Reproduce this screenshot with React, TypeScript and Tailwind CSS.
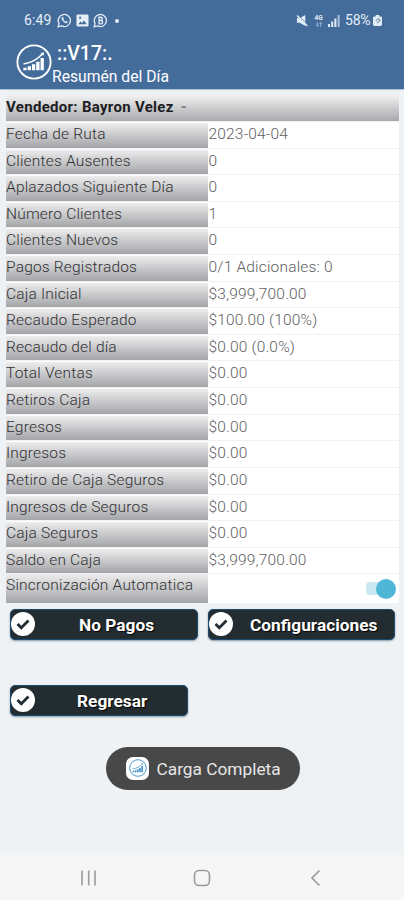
import React from 'react';

interface Row {
  label: string;
  value: string;
}

const ROWS: Row[] = [
  { label: 'Fecha de Ruta', value: '2023-04-04' },
  { label: 'Clientes Ausentes', value: '0' },
  { label: 'Aplazados Siguiente Día', value: '0' },
  { label: 'Número Clientes', value: '1' },
  { label: 'Clientes Nuevos', value: '0' },
  { label: 'Pagos Registrados', value: '0/1 Adicionales: 0' },
  { label: 'Caja Inicial', value: '$3,999,700.00' },
  { label: 'Recaudo Esperado', value: '$100.00 (100%)' },
  { label: 'Recaudo del día', value: '$0.00 (0.0%)' },
  { label: 'Total Ventas', value: '$0.00' },
  { label: 'Retiros Caja', value: '$0.00' },
  { label: 'Egresos', value: '$0.00' },
  { label: 'Ingresos', value: '$0.00' },
  { label: 'Retiro de Caja Seguros', value: '$0.00' },
  { label: 'Ingresos de Seguros', value: '$0.00' },
  { label: 'Caja Seguros', value: '$0.00' },
  { label: 'Saldo en Caja', value: '$3,999,700.00' },
];

const Logo: React.FC<{ className?: string }> = ({ className }) => (
  <svg viewBox="0 0 36 36" className={className} fill="none" stroke="currentColor">
    <circle cx="18" cy="18" r="16.6" strokeWidth="1.9" />
    <path d="M9 26.300v-2.600M13.300 26.300v-4M17.600 26.300v-6M21.900 26.300v-8.500M26.200 26.300V14" strokeWidth="3.300" />
    <path d="M7.500 20C15 19 21.500 15.500 27.300 9" strokeWidth="1.5" />
    <path d="M24.800 9.800l2.700-1-.4 2.800" strokeWidth="1" />
  </svg>
);

const StatusBar = () => (
  <div className="flex h-10 items-center justify-between pt-[1px] pr-[22px] pl-[24px] text-[#e3edf7]">
    <div className="flex items-center">
      <span className="w-[33px] text-[14px] tracking-[0.1px]">6:49</span>
      <svg viewBox="0 0 16 16" className="size-[15px]" fill="none" stroke="currentColor" strokeWidth="1.4">
        <path d="M1.200 14.800l1-3.500A6.500 6.500 0 1 1 4.800 13.800z" />
        <path d="M5.400 4.600c-.8.8-.6 2.300.9 4s3.400 2.600 4.600 1.700l.3-1-1.700-.9-.8.7c-1-.4-1.600-1.100-2-2l.6-.8-.8-1.800z" fill="currentColor" strokeWidth=".3" />
      </svg>
      <svg viewBox="0 0 14 14" className="ml-[4px] size-[13px]">
        <path fillRule="evenodd" fill="currentColor" d="M2 .5h10a1.500 1.500 0 0 1 1.500 1.500v10a1.500 1.500 0 0 1-1.500 1.500H2A1.500 1.500 0 0 1 .5 12V2A1.500 1.500 0 0 1 2 .5zM2.500 11h9L8.600 7 6.500 9.600 5 8zM3.500 3v2h2V3z" />
      </svg>
      <svg viewBox="0 0 16 16" className="ml-[4px] size-[15px]" fill="none" stroke="currentColor" strokeWidth="1.4">
        <path d="M1.200 14.800l1-3.500A6.500 6.500 0 1 1 4.800 13.800z" />
        <path d="M6.500 4.500v7h2a1.700 1.700 0 0 0 0-3.500h-2 1.700a1.700 1.700 0 0 0 0-3.500z" />
      </svg>
      <span className="ml-[7px] size-[4px] rounded-full bg-[#e3edf7]" />
    </div>
    <div className="flex items-center">
      <svg viewBox="0 0 14 14" className="mr-[1px] size-[13px]">
        <path d="M1 4.500h3L10 1v12L4 9.500H1z" fill="currentColor" />
        <path d="M2.500 1l10 11.500" stroke="#436c9b" strokeWidth="1" fill="none" />
        <path d="M1.200 1.500l11 11.500" stroke="currentColor" strokeWidth="1.600" fill="none" />
      </svg>
      <span className="ml-[4px] flex w-[9px] flex-col items-center">
        <span className="text-[6.5px] leading-[7px] font-bold">4G</span>
        <svg viewBox="0 0 8 5" className="h-[5px] w-[8px] opacity-60" fill="none" stroke="currentColor" strokeWidth=".9">
          <path d="M2.300 0v4.300M.8 2.900l1.500 1.500 1.500-1.500M5.700 5V.7M4.200 2.100L5.700.6l1.500 1.500" />
        </svg>
      </span>
      <svg viewBox="0 0 12 12" className="ml-[5px] size-[12px]" fill="currentColor">
        <path d="M0 9h2v3H0zM3.200 6.500h2V12h-2zM6.400 3.500h2V12h-2z" />
        <path d="M9.600 0h2v12h-2z" opacity=".65" />
      </svg>
      <span className="ml-[5px] w-[28px] text-[14px] tracking-[-0.2px]">58%</span>
      <svg viewBox="0 0 10 12" className="h-[11px] w-[9px]">
        <path d="M3 0h4v1.500h1.500A1.500 1.500 0 0 1 10 3v7.500A1.500 1.500 0 0 1 8.500 12h-7A1.500 1.500 0 0 1 0 10.500V3a1.500 1.500 0 0 1 1.500-1.500H3z" fill="currentColor" />
        <path d="M3 6.500l3-2.500 2 2-3.500 3" fill="none" stroke="#7d91a9" strokeWidth="1.200" />
      </svg>
    </div>
  </div>
);

const ActionButton: React.FC<{ className: string; label: string; labelClass: string }> = ({ className, label, labelClass }) => (
  <button className={`flex h-[31px] items-center rounded-[5px] border border-[#1d4a70] bg-[#232d31] text-white shadow-[0_1px_2px_rgba(30,60,90,0.5)] ${className}`}>
    <svg viewBox="0 0 24 24" className="size-[24px] shrink-0">
      <circle cx="12" cy="12" r="12" fill="#fff" />
      <path d="M6.500 12l3.800 3.800 7.200-7.200" fill="none" stroke="#232d31" strokeWidth="2.800" />
    </svg>
    <span className={`mt-[3px] text-[17.3px] leading-none font-bold whitespace-nowrap [text-shadow:1px_1px_1px_#000] ${labelClass}`}>{label}</span>
  </button>
);

const App: React.FC = () => {
  return (
    <div className="flex h-[900px] w-[404px] flex-col overflow-hidden bg-[#eef2f4] font-['Roboto',sans-serif]">
      <header className="h-[90px] shrink-0 border-b border-[#a9c3d8] bg-[#436c9b] text-white">
        <StatusBar />
        <div className="flex">
          <Logo className="mt-[4px] ml-[16px] size-[36px] shrink-0" />
          <div className="flex flex-col">
            <span className="ml-[5px] h-[26px] text-[19.5px] leading-[27px] font-medium">::V17:.</span>
            <span className="text-[15.700px] leading-[21px]">Resumén del Día</span>
          </div>
        </div>
      </header>

      <main className="flex flex-col pt-[5px]">
        <div className="ml-[6px] w-[393px] bg-white">
          <div className="h-[26px] bg-linear-to-b from-[#f1f1f2] to-[#a9aaac] text-[15px] leading-[25px] font-bold tracking-[0.3px] text-[#1d1d1f]">
            Vendedor: Bayron Velez <span className="ml-[3px] text-[#777]">-</span>
          </div>
          {ROWS.map((row) => (
            <div key={row.label} className="flex h-[26.62px] border-t border-[#f0f1f2] pt-[1px] text-[15.5px] leading-[22px] font-light tracking-[0.19px]">
              <div className="w-[202px] bg-linear-to-b from-[#ededee] to-[#a4a5a8] text-[#303032]">{row.label}</div>
              <div className="pl-[0.5px] text-[#606062]">{row.value}</div>
            </div>
          ))}
          <div className="flex h-[29.5px] items-stretch border-t border-[#f0f1f2] text-[15.5px] leading-[22px] font-light tracking-[0.22px]">
            <div className="w-[202px] bg-linear-to-b from-[#ededee] to-[#a4a5a8] text-[#303032]">Sincronización Automatica</div>
            <div className="flex flex-1 items-center justify-end pr-[3px]">
              <span className="h-[13px] w-[20px] rounded-l-[4px] bg-[#c9e8f2]" />
              <span className="-ml-[10px] size-[20px] rounded-full bg-[#4fb6d8]" />
            </div>
          </div>
        </div>

        <div className="mt-[6px] ml-[10px] flex gap-[10px]">
          <ActionButton className="w-[188px]" label="No Pagos" labelClass="ml-[44px]" />
          <ActionButton className="w-[187px]" label="Configuraciones" labelClass="ml-[17px]" />
        </div>
        <div className="mt-[45px] ml-[10px]">
          <ActionButton className="w-[178px]" label="Regresar" labelClass="ml-[42px]" />
        </div>

        <div className="mt-[31px] ml-[106px] flex h-[43px] w-[194px] items-center rounded-full bg-[#484848] pl-[20px]">
          <span className="flex size-[23px] items-center justify-center rounded-[7px] bg-white">
            <Logo className="size-[18px] text-[#3f96cd]" />
          </span>
          <span className="mt-[3px] ml-[7.5px] text-[17.3px] text-[#e6e6e6]">Carga Completa</span>
        </div>
      </main>

      <nav className="mt-auto flex h-[44px] shrink-0 bg-[#f6f6f6] text-[#9a9a9a] shadow-[0_-3px_6px_#f4f6f6]">
        <svg viewBox="0 0 404 44" className="h-[44px] w-full" fill="none" stroke="currentColor" strokeWidth="1.600">
          <path d="M82 14.500v15M88.700 14.500v15M95 14.500v15" />
          <rect x="194.500" y="14.500" width="15" height="15" rx="4.500" />
          <path d="M319.500 14.500l-7.500 7.500 7.500 7.500" />
        </svg>
      </nav>
    </div>
  );
};

export default App;
